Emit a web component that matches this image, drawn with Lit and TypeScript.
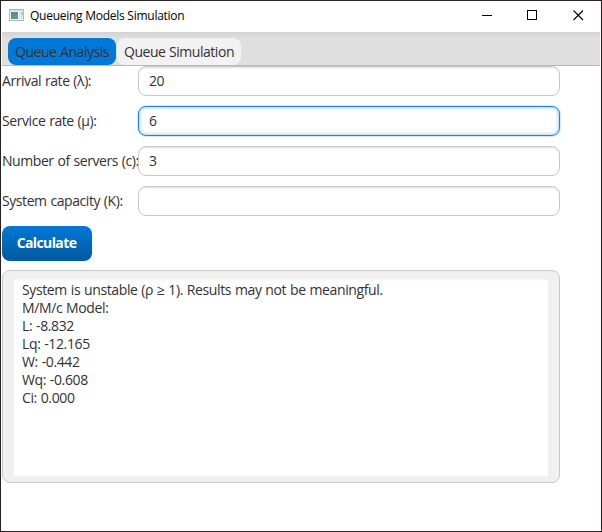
import { LitElement, html, css } from "lit";
import { customElement, property, state } from "lit/decorators.js";
import { classMap } from "lit/directives/class-map.js";

@customElement("title-bar")
class TitleBar extends LitElement {
  @property() heading = "";

  static styles = css`
    :host { display: flex; height: 31px; flex: none; background: #fff; color: #000; }
    .icon { width: 16px; height: 14px; margin: 7px 0 0 8px; flex: none; }
    .heading { flex: 1; margin-left: 5px; font-size: 12px; line-height: 30px; letter-spacing: -0.26px; word-spacing: 0; white-space: nowrap; }
    .controls { display: flex; }
    .control { width: 45px; height: 29px; flex: none; display: flex; align-items: center; justify-content: center; }
    .control:first-child { margin-left: -1px; }
    .control:last-child { width: 46px; }
  `;

  render() {
    return html`
      <svg class="icon" viewBox="0 0 16 14">
        <defs>
          <linearGradient id="pane" x1="0" y1="0" x2="0.6" y2="1">
            <stop offset="0" stop-color="#4b86a8" />
            <stop offset="1" stop-color="#55a878" />
          </linearGradient>
        </defs>
        <rect x="0.5" y="1.5" width="14" height="11" fill="#eceef0" stroke="#b4b8bc" />
        <rect x="1" y="2" width="13" height="1" fill="#d0d4d8" />
        <rect x="2" y="4" width="7" height="7" fill="url(#pane)" />
        <rect x="9" y="4" width="1" height="7" fill="#fff" />
        <rect x="10" y="4" width="2" height="7" fill="#e3e8f4" />
        <rect x="12" y="4" width="2" height="3" fill="#a5cfc0" />
        <rect x="12" y="7" width="2" height="4" fill="#dfe3e8" />
      </svg>
      <span class="heading">${this.heading}</span>
      <div class="controls">
        <span class="control"><svg width="11" height="11" shape-rendering="crispEdges"><path d="M0 5.5H10" stroke="#000" /></svg></span>
        <span class="control"><svg width="11" height="11" shape-rendering="crispEdges"><path d="M.5 .5H9.5V9.5H.5Z" fill="none" stroke="#000" /></svg></span>
        <span class="control"><svg width="11" height="11"><path d="M.5 .5L10 10M10 .5L.5 10" stroke="#000" stroke-width="1.1" /></svg></span>
      </div>
    `;
  }
}

@customElement("form-row")
class FormRow extends LitElement {
  @property() label = "";
  @property() value = "";
  @property({ type: Boolean }) active = false;

  static styles = css`
    :host { display: flex; height: 30px; align-items: center; }
    .label { width: 136px; flex: none; white-space: nowrap; }
    .field {
      flex: 1; min-width: 0; height: 30px; box-sizing: border-box; margin: 0; padding: 0 10px 1px;
      border: 1px solid #c8c8c8; border-radius: 8px; outline: none; background: #fff;
      box-shadow: inset 0 2px 2px -1px #dedede; font: inherit; letter-spacing: inherit; color: #323232;
    }
    .active { border-color: #1c86dc; box-shadow: 0 0 0 1px #d5e8f8, inset 0 0 0 1px #cfe3f5, inset 0 0 3px 2px #d7e3ee; }
  `;

  render() {
    return html`
      <span class="label">${this.label}</span>
      <input class=${classMap({ field: true, active: this.active })} .value=${this.value} />
    `;
  }
}

@customElement("app-root")
class AppRoot extends LitElement {
  @state() private tab = 0;

  private tabs = ["Queue Analysis", "Queue Simulation"];

  private results = [
    "System is unstable (ρ ≥ 1). Results may not be meaningful.",
    "M/M/c Model:",
    "L: -8.832",
    "Lq: -12.165",
    "W: -0.442",
    "Wq: -0.608",
    "Ci: 0.000",
  ];

  static styles = css`
    :host {
      display: flex; flex-direction: column; box-sizing: border-box; width: 602px; height: 532px;
      border: 1px solid #242223; background: #fff; overflow: hidden;
      font: 14px/18px "Open Sans", "Noto Sans", sans-serif; letter-spacing: -0.37px; word-spacing: 0.5px; color: #323232;
    }
    .tabs {
      display: flex; gap: 1px; flex: none; box-sizing: border-box; height: 34px; margin: 0 1px; padding: 6px 6px 0;
      background: linear-gradient(#d2d2d2, #dfdfdf 6px); border-bottom: 1px solid #b8b8b8;
    }
    .tab { height: 27px; box-sizing: border-box; padding-left: 7px; border-radius: 8px; background: #f2f2f2; line-height: 28px; letter-spacing: -0.47px; white-space: nowrap; }
    .tab:first-child { width: 108px; }
    .tab:last-child { width: 124px; }
    .tab.selected { background: #0078d7; }
    .page { display: flex; flex-direction: column; width: 558px; margin-left: 1px; }
    .form { display: flex; flex-direction: column; gap: 10px; letter-spacing: -0.43px; word-spacing: 0.6px; }
    .calculate {
      width: 90px; height: 35px; margin: 10px 0 9px; padding: 0 1px 1px 0; border: 0; border-radius: 8px; color: #fff;
      background: linear-gradient(#0078d7, #005a9e); font: 700 14px/34px "Open Sans", sans-serif; letter-spacing: -0.6px;
    }
    .output {
      box-sizing: border-box; height: 213px; padding: 8px 11px 6px; border: 1px solid #c8c8c8; border-radius: 8px;
      background: #f0f0f0;
    }
    .lines { height: 100%; box-sizing: border-box; padding: 2px 8px; background: linear-gradient(#f7f7f7, #fff 3px); white-space: nowrap; }
  `;

  render() {
    return html`
      <title-bar heading="Queueing Models Simulation"></title-bar>
      <div class="tabs">
        ${this.tabs.map(
          (name, i) => html`<div class=${classMap({ tab: true, selected: i === this.tab })} @click=${() => (this.tab = i)}>${name}</div>`
        )}
      </div>
      <div class="page">
        <div class="form">
          <form-row label="Arrival rate (λ):" value="20"></form-row>
          <form-row label="Service rate (μ):" value="6" active></form-row>
          <form-row label="Number of servers (c):" value="3"></form-row>
          <form-row label="System capacity (K):"></form-row>
        </div>
        <button class="calculate">Calculate</button>
        <div class="output">
          <div class="lines">${this.results.map((line) => html`<div>${line}</div>`)}</div>
        </div>
      </div>
    `;
  }
}
